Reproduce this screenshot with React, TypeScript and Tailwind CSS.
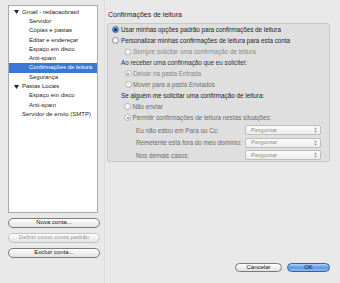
import React from "react";

const tree = [
  { label: "Gmail - redacaobrasil", level: 0, open: true },
  { label: "Servidor", level: 1 },
  { label: "Cópias e pastas", level: 1 },
  { label: "Editar e endereçar", level: 1 },
  { label: "Espaço em disco", level: 1 },
  { label: "Anti-spam", level: 1 },
  { label: "Confirmações de leitura", level: 1, selected: true },
  { label: "Segurança", level: 1 },
  { label: "Pastas Locais", level: 0, open: true },
  { label: "Espaço em disco", level: 1 },
  { label: "Anti-spam", level: 1 },
  { label: "Servidor de envio (SMTP)", level: 0 },
];

function Radio({ checked, disabled }: { checked?: boolean; disabled?: boolean }) {
  if (checked && !disabled) {
    return (
      <span className="flex h-[7px] w-[7px] shrink-0 items-center justify-center rounded-full border border-[#3b5f9a] bg-gradient-to-b from-[#a9c9f2] to-[#3f7fd8]">
        <span className="h-[2.5px] w-[2.5px] rounded-full bg-[#14233f]" />
      </span>
    );
  }
  return (
    <span
      className={`flex h-[7px] w-[7px] shrink-0 items-center justify-center rounded-full border bg-gradient-to-b from-white to-[#ececec] ${
        disabled ? "border-[#b4b4b4]" : "border-[#8c8c8c]"
      }`}
    >
      {checked && <span className="h-[2px] w-[2px] rounded-full bg-[#7c7c7c]" />}
    </span>
  );
}

function Select() {
  return (
    <div className="flex h-[10px] w-[76px] items-center justify-between rounded-[2px] border border-[#bdbdbd] bg-gradient-to-b from-[#fbfbfb] to-[#ededed] pl-[5px] pr-[3px] text-[6px] text-[#8d8d8d]">
      <span>Perguntar</span>
      <svg width="3" height="6" viewBox="0 0 3 6">
        <path d="M1.5 0.3 L2.8 2.2 L0.2 2.2 Z M1.5 5.7 L2.8 3.8 L0.2 3.8 Z" fill="#8a8a8a" />
      </svg>
    </div>
  );
}

function PillButton({ children, disabled }: { children: React.ReactNode; disabled?: boolean }) {
  return (
    <button
      className={`flex h-[9.5px] w-[92px] items-center justify-center rounded-full border bg-gradient-to-b from-white to-[#e2e2e2] text-[6px] ${
        disabled ? "border-[#c2c2c2] text-[#9a9a9a]" : "border-[#7b7b7b] text-[#111]"
      }`}
    >
      {children}
    </button>
  );
}

export default function App() {
  return (
    <div className="flex h-[283px] w-[340px] overflow-hidden bg-[#e8e8e8] font-['Liberation_Sans',Arial,sans-serif] text-[6px] text-[#1c1c1c]">
      <aside className="flex w-[104px] shrink-0 flex-col pl-[8px] pt-[5px]">
        <div className="h-[208px] w-[90px] border border-[#a9a9a9] bg-white pt-[1.5px]">
          {tree.map((item, i) => (
            <div
              key={i}
              className={`flex h-[9.3px] items-center ${
                item.selected ? "bg-[#3a77d6] text-white" : ""
              } ${item.level === 0 ? "pl-[2px]" : "pl-[20px]"}`}
            >
              {item.level === 0 && (
                <span className="flex w-[10px] justify-center">
                  {item.open && (
                    <svg width="5" height="4" viewBox="0 0 5 4">
                      <path d="M0 0 H5 L2.5 4 Z" fill="#222" />
                    </svg>
                  )}
                </span>
              )}
              <span className={item.level === 0 ? "pl-[1px]" : ""}>{item.label}</span>
            </div>
          ))}
        </div>
        <div className="mt-[5px] flex flex-col gap-[5.5px]">
          <PillButton>Nova conta...</PillButton>
          <PillButton disabled>Definir como conta padrão</PillButton>
          <PillButton>Excluir conta...</PillButton>
        </div>
      </aside>

      <main className="flex flex-1 flex-col border-l border-[#dcdcdc] pl-[2px] pr-[10px] pt-[10px]">
        <h2 className="h-[9px] pl-[1px] text-[7px] leading-[9px] text-[#1c1c1c]">Confirmações de leitura</h2>
        <section className="mt-[3.5px] h-[139.5px] rounded-[3px] border border-[#c9c9c9] bg-[#dfdfdf] pl-[4px] pr-[8px] pt-[0.5px] text-[6.3px]">
          <div className="flex h-[11px] items-center gap-[2px]">
            <Radio checked />
            <span>Usar minhas opções padrão para confirmações de leitura</span>
          </div>
          <div className="flex h-[11px] items-center gap-[2px]">
            <Radio />
            <span>Personalizar minhas confirmações de leitura para esta conta</span>
          </div>
          <div className="flex h-[11px] items-center gap-[2px] pl-[13px] text-[#8a8a8a]">
            <span className="h-[6px] w-[6px] shrink-0 rounded-[1px] border border-[#bcbcbc] bg-gradient-to-b from-white to-[#ededed]" />
            <span>Sempre solicitar uma confirmação de leitura</span>
          </div>
          <div className="flex h-[11px] items-center pl-[9px] text-[#333]">Ao receber uma confirmação que eu solicitei:</div>
          <div className="flex h-[11px] items-center gap-[1.5px] pl-[12.5px] text-[#858585]">
            <Radio checked disabled />
            <span>Deixar na pasta Entrada</span>
          </div>
          <div className="flex h-[11px] items-center gap-[1.5px] pl-[12.5px] text-[#6e6e6e]">
            <Radio disabled />
            <span>Mover para a pasta Enviados</span>
          </div>
          <div className="flex h-[11px] items-center pl-[9px] text-[#222]">Se alguém me solicitar uma confirmação de leitura:</div>
          <div className="flex h-[11px] items-center gap-[1.5px] pl-[12px] text-[#6a6a6a]">
            <Radio disabled />
            <span>Não enviar</span>
          </div>
          <div className="flex h-[11px] items-center gap-[1.5px] pl-[12px] text-[#6a6a6a]">
            <Radio checked disabled />
            <span>Permitir confirmações de leitura nestas situações:</span>
          </div>
          <div className="mt-[1px]">
            {["Eu não estou em Para ou Cc:", "Remetente está fora do meu domínio:", "Nos demais casos:"].map((label) => (
              <div key={label} className="flex h-[12.5px] items-center justify-between pl-[24px] text-[#6a6a6a]">
                <span>{label}</span>
                <Select />
              </div>
            ))}
          </div>
        </section>

        <div className="mt-auto mb-[11px] flex justify-end gap-[5px]">
          <button className="flex h-[9.5px] w-[47px] items-center justify-center rounded-full border border-[#7b7b7b] bg-gradient-to-b from-white to-[#e0e0e0] text-[6px] text-[#111]">
            Cancelar
          </button>
          <button className="flex h-[9.5px] w-[43px] items-center justify-center rounded-full border border-[#3d5f95] bg-gradient-to-b from-[#b3d1f6] via-[#5d9ae6] to-[#8cbdf5] text-[6px] text-[#0d1a33]">
            OK
          </button>
        </div>
      </main>
    </div>
  );
}
